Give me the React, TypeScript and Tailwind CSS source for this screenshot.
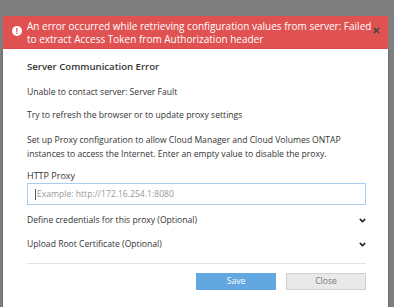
import { ChevronDown, X } from "lucide-react";

const font = { fontFamily: '"Open Sans", "Liberation Sans", sans-serif' };

export default function App() {
  return (
    <div className="h-[307px] w-[394px] overflow-hidden bg-[#7f7f7f] pt-4 pl-[3px] pr-[6px]" style={font}>
      {/* error banner */}
      <div className="flex items-start bg-[#e05252] pl-[9px] pr-[7px] pt-[4px] pb-[3px] text-white">
        <div className="mt-[6px] mr-[5px] flex h-[10px] w-[10px] shrink-0 items-center justify-center rounded-full bg-white text-[8px] font-bold leading-none text-[#e05252]">
          !
        </div>
        <p className="mr-[-2px] flex-1 text-[10px] leading-[13px]">
          An error occurred while retrieving configuration values from server: Failed to extract Access Token from
          Authorization header
        </p>
        <X className="mt-[6px] text-[#444]" size={9} strokeWidth={4} />
      </div>

      {/* dialog */}
      <div className="bg-white pl-6 pr-[22px] pt-[11px] pb-[17px] text-[#333] shadow-[0_1px_2px_rgba(0,0,0,0.4)]">
        <h2 className="text-[9.6px] font-semibold leading-[14px]">Server Communication Error</h2>
        <p className="mt-[12px] text-[8.6px] leading-[13px]">Unable to contact server: Server Fault</p>
        <p className="mt-[10px] text-[8.6px] leading-[13px]">Try to refresh the browser or to update proxy settings</p>
        <p className="mt-[11px] text-[8.6px] leading-[14px]">
          Set up Proxy configuration to allow Cloud Manager and Cloud Volumes ONTAP instances to access the Internet.
          Enter an empty value to disable the proxy.
        </p>
        <label className="mt-[8px] block text-[9px] leading-[13px]">HTTP Proxy</label>
        <div className="mt-[1px] flex h-[22px] items-center border border-[#a9cdef] px-[7px] text-[8.6px] text-[#999]">
          <span className="mr-[1px] h-[11px] w-px bg-[#555]" />
          Example: http://172.16.254.1:8080
        </div>
        <div className="mt-[7px] flex h-[17px] items-center justify-between text-[8.6px]">
          <span>Define credentials for this proxy (Optional)</span>
          <ChevronDown size={9} strokeWidth={4} className="mr-[-1px] text-[#222]" />
        </div>
        <div className="mt-[7px] flex h-[17px] items-center justify-between text-[8.6px]">
          <span>Upload Root Certificate (Optional)</span>
          <ChevronDown size={9} strokeWidth={4} className="mr-[-1px] text-[#222]" />
        </div>
        <div className="mt-[10px] h-px bg-[#e3e3e3]" />
        <div className="mt-[9px] flex justify-end gap-[10px]">
          <button className="h-[17px] w-[80px] bg-[#63a7e1] text-[8.6px] text-white">Save</button>
          <button className="h-[17px] w-[80px] border border-[#d0d0d0] bg-[#e9e9e9] text-[8.6px] text-[#777]">
            Close
          </button>
        </div>
      </div>
    </div>
  );
}
